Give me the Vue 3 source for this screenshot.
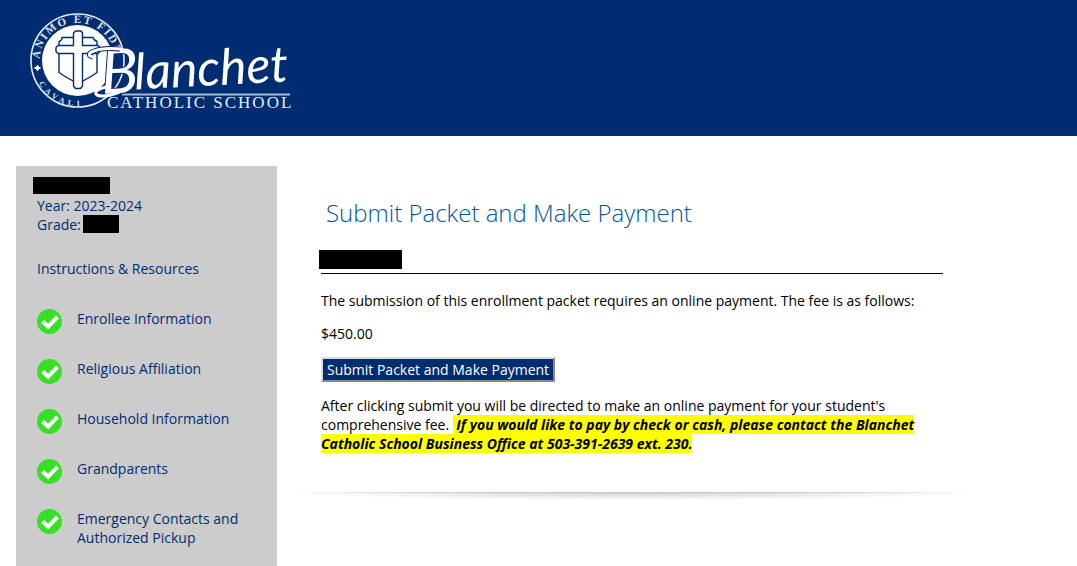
<script setup>
const steps = [
  'Enrollee Information',
  'Religious Affiliation',
  'Household Information',
  'Grandparents',
  'Emergency Contacts and Authorized Pickup',
]
</script>

<template>
  <div class="page">
    <header class="banner">
      <svg class="logo" width="300" height="120" viewBox="0 0 300 120" role="img" aria-label="Blanchet Catholic School">
        <defs>
          <path id="motto-top" d="M40 67A38 38 0 1 1 115 67" />
          <path id="motto-bottom" d="M35 75A45 45 0 0 0 113 89" />
        </defs>
        <circle cx="77.5" cy="60.5" r="46.5" fill="none" stroke="#e6ebf3" stroke-width="1.6" />
        <circle cx="77.5" cy="60.5" r="35.5" fill="#fff" />
        <path d="M37.5 65l1 2 2 1-2 1-1 2-1-2-2-1 2-1z" fill="#fff" stroke="#fff" />
        <text class="motto"><textPath href="#motto-top" startOffset="8">ANIMO ET FIDE</textPath></text>
        <text class="motto small"><textPath href="#motto-bottom" startOffset="9">CAVALI</textPath></text>
        <g fill="#fff" stroke="#002d72" stroke-width="1.4" stroke-linejoin="round">
          <path d="M62 37.5h31q1 3 4 4v31q-7 5-19 11-12-6-19-11v-31q3-1 3-4z" />
          <path d="M75.500 31h5.500l1.500 2v12.500h15.500l2 2v4l-2 2H82.500V86l-2 2.500h-5L73.500 86V53.500H58l-2-2v-4l2-2h15.500V33z" />
        </g>
        <path d="M122 94.500h168" stroke="#a9b8d2" stroke-width="2" />
        <g transform="rotate(-3 104 92)">
          <text x="102" y="94" class="script initial">B</text>
          <text x="135" y="91" class="script">lanchet</text>
        </g>
        <path d="M93 57c-5-1-5-4 1-6 7-3 16-3 26-2" fill="none" stroke="#002d72" stroke-width="5" />
        <path d="M93 57c-5-1-5-4 1-6 7-3 16-3 28-2" fill="none" stroke="#fff" stroke-width="3" stroke-linecap="round" />
        <path d="M106 87c-8 2-13 5-9 8 7 3 20-1 29-6" fill="none" stroke="#fff" stroke-width="3" stroke-linecap="round" />
        <text x="107" y="108" class="school">CATHOLIC SCHOOL</text>
      </svg>
    </header>

    <div class="columns">
      <aside class="sidebar">
        <div class="student">
          <span class="redacted name"></span>
          <div>Year: 2023-2024</div>
          <div class="grade">Grade: <span class="redacted"></span></div>
        </div>
        <nav>
          <a class="resources" href="#instructions">Instructions &amp; Resources</a>
          <ul>
            <li v-for="step in steps" :key="step">
              <svg width="25" height="25" viewBox="0 0 25 25" aria-hidden="true">
                <circle cx="12.500" cy="12.500" r="12.500" fill="#37df26" />
                <path d="M5.600 12.600l5.500 5 9.400-9.800" fill="none" stroke="#fff" stroke-width="4" />
              </svg>
              <a href="#step">{{ step }}</a>
            </li>
          </ul>
        </nav>
      </aside>

      <main>
        <div class="content">
          <h1>Submit Packet and Make Payment</h1>
          <div class="payer"><span class="redacted"></span></div>
          <p>The submission of this enrollment packet requires an online payment. The fee is as follows:</p>
          <p>$450.00</p>
          <button type="button">Submit Packet and Make Payment</button>
          <p>After clicking submit you will be directed to make an online payment for your student's comprehensive fee. <mark>&nbsp;If you would like to pay by check or cash, please contact the Blanchet Catholic School Business Office at 503-391-2639 ext. 230.</mark></p>
        </div>
        <div class="shadow"></div>
      </main>
    </div>
  </div>
</template>

<style>
body {
  margin: 0;
  background: #fff;
}
</style>

<style scoped>
.page {
  display: flex;
  flex-direction: column;
  min-height: 100vh;
  font: 14px/19px "Open Sans", sans-serif;
  color: #000;
}
.banner {
  padding-bottom: 16px;
  background: #002d72;
}
.logo {
  display: block;
}
.motto {
  font: bold 11px "Liberation Serif", serif;
  letter-spacing: 2px;
  fill: #dfe5ef;
}
.motto.small {
  font-size: 8px;
  letter-spacing: 4px;
}
.script {
  font: italic 50px Lato, sans-serif;
  fill: #fff;
}
.script.initial {
  font-size: 62px;
  stroke: #002d72;
  stroke-width: 2px;
  paint-order: stroke;
}
.school {
  font: 17px "Liberation Serif", serif;
  letter-spacing: 2px;
  fill: #e6ebf3;
}
.columns {
  display: flex;
  flex: 1;
  gap: 20px;
  padding: 30px 16px 0;
}
.sidebar {
  box-sizing: border-box;
  flex: 0 0 261px;
  padding: 11px 21px 0;
  background: #ccc;
  color: #002d72;
}
a {
  color: inherit;
  text-decoration: none;
}
.redacted {
  display: block;
  background: #000;
}
.name {
  width: 77px;
  height: 17px;
  margin: 0 0 2px -4px;
}
.grade {
  display: flex;
  gap: 2px;
}
.grade .redacted {
  width: 36px;
  height: 18px;
}
.resources {
  display: block;
  margin: 25px 0 31px;
}
ul {
  display: grid;
  gap: 25px;
  margin: 0;
  padding: 0;
  list-style: none;
}
li {
  display: flex;
  gap: 15px;
}
li svg {
  flex: none;
}
main {
  flex: 0 1 673px;
}
.content {
  padding: 30px 27px 39px 24px;
}
h1 {
  margin: 0 0 21px 5px;
  font-size: 24px;
  line-height: 33px;
  font-weight: 300;
  color: #00589c;
}
.payer {
  padding-bottom: 4px;
  border-bottom: 1px solid #000;
}
.payer .redacted {
  width: 83px;
  height: 19px;
  margin-left: -2px;
}
p {
  margin: 0 0 14px;
}
.payer + p {
  margin-top: 17px;
}
button {
  display: block;
  margin-bottom: 14px;
  padding: 1px 4px;
  border: 2px outset #ddd;
  background: #002d72;
  color: #fff;
  font: inherit;
}
button + p {
  margin: 0;
}
mark {
  background: #ff0;
  color: #000;
  font-weight: bold;
  font-style: italic;
}
.shadow {
  height: 8px;
  background:
    linear-gradient(90deg, transparent, #c8c8c8 30%, #c8c8c8 70%, transparent) top / 100% 1px no-repeat,
    radial-gradient(ellipse 52% 100% at 50% 0, #ccc, #fff);
}
</style>
